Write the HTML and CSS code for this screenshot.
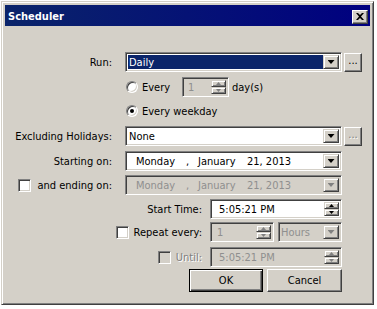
FILE: index.html
```html
<!DOCTYPE html>
<html lang="en">
<head>
    <meta charset="UTF-8">
    <title>Scheduler</title>
    <link rel="stylesheet" href="styles.css">
</head>
<body>
    <div class="window">
        <div class="titlebar">
            <span class="title">Scheduler</span>
            <span class="btn close-btn">
                <svg width="8" height="7" viewBox="0 0 8 7"><path d="M0 0h2l2 2 2-2h2L5 3.5 8 7H6L4 5 2 7H0l3-3.5z" fill="#000"/></svg>
            </span>
        </div>
        <div class="client">
            <div class="row row-run">
                <span class="label">Run:</span>
                <div class="field combo">
                    <span class="value selected">Daily</span>
                    <span class="drop-btn"><i class="arrow"></i></span>
                </div>
                <span class="btn dots-btn">...</span>
            </div>

            <div class="row row-every">
                <span class="radio"></span>
                <span class="opt-text every-text">Every</span>
                <div class="field spin spin-days disabled">
                    <span class="value">1</span>
                    <span class="spin-btns"><span class="spin-btn"><i class="up"></i></span><span class="spin-btn"><i class="down"></i></span></span>
                </div>
                <span class="unit">day(s)</span>
            </div>

            <div class="row row-weekday">
                <span class="radio checked"></span>
                <span class="opt-text">Every weekday</span>
            </div>

            <div class="row row-holidays">
                <span class="label">Excluding Holidays:</span>
                <div class="field combo">
                    <span class="value">None</span>
                    <span class="drop-btn"><i class="arrow"></i></span>
                </div>
                <span class="btn dots-btn disabled">...</span>
            </div>

            <div class="row row-start">
                <span class="label">Starting on:</span>
                <div class="field combo date">
                    <span class="value"><span class="d-day">Monday</span><span class="d-sep">,</span><span class="d-month">January</span><span>21, 2013</span></span>
                    <span class="drop-btn"><i class="arrow"></i></span>
                </div>
            </div>

            <div class="row row-end">
                <span class="label check-label"><span class="check"></span><span>and ending on:</span></span>
                <div class="field combo date disabled">
                    <span class="value"><span class="d-day">Monday</span><span class="d-sep">,</span><span class="d-month">January</span><span>21, 2013</span></span>
                    <span class="drop-btn"><i class="arrow"></i></span>
                </div>
            </div>

            <div class="row row-time">
                <span class="label label-wide">Start Time:</span>
                <div class="field spin time">
                    <span class="value">5:05:21 PM</span>
                    <span class="spin-btns"><span class="spin-btn"><i class="up"></i></span><span class="spin-btn"><i class="down"></i></span></span>
                </div>
            </div>

            <div class="row row-repeat">
                <span class="label label-wide check-label"><span class="check"></span><span>Repeat every:</span></span>
                <div class="field spin spin-repeat disabled">
                    <span class="value">1</span>
                    <span class="spin-btns"><span class="spin-btn"><i class="up"></i></span><span class="spin-btn"><i class="down"></i></span></span>
                </div>
                <div class="field combo hours disabled">
                    <span class="value">Hours</span>
                    <span class="drop-btn"><i class="arrow"></i></span>
                </div>
            </div>

            <div class="row row-until">
                <span class="label label-wide check-label disabled"><span class="check"></span><span>Until:</span></span>
                <div class="field spin time disabled">
                    <span class="value">5:05:21 PM</span>
                    <span class="spin-btns"><span class="spin-btn"><i class="up"></i></span><span class="spin-btn"><i class="down"></i></span></span>
                </div>
            </div>

            <div class="row row-buttons">
                <span class="btn push default">OK</span>
                <span class="btn push">Cancel</span>
            </div>
        </div>
    </div>
</body>
</html>
```

FILE: styles.css
```css
body {
    margin: 0;
    background-color: #fff;
    font-family: "DejaVu Sans Condensed", "DejaVu Sans", sans-serif;
    font-size: 11px;
    color: #000;
}

.window {
    box-sizing: border-box;
    width: 373px;
    height: 304px;
    margin: 1px 0 0 1px;
    padding: 3px;
    background-color: #d4d0c8;
    border: 1px solid;
    border-color: #d4d0c8 #404040 #404040 #d4d0c8;
    box-shadow: inset 1px 1px #fff, inset -1px -1px #808080;
}

.titlebar {
    height: 21px;
    display: flex;
    align-items: center;
    justify-content: space-between;
    padding: 0 2px 0 3px;
    background: linear-gradient(90deg, #0a246a, #000080);
    color: #fff;
    font-weight: bold;
}

.title {
    padding-top: 2px;
}

/* raised 3d look */
.btn {
    box-sizing: border-box;
    display: flex;
    align-items: center;
    justify-content: center;
    background-color: #d4d0c8;
    border: 1px solid;
    border-color: #fff #404040 #404040 #fff;
    box-shadow: inset -1px -1px #808080;
    flex: none;
}

.close-btn {
    width: 16px;
    height: 14px;
    margin-top: 2px;
}

.client {
    padding-top: 26px;
}

.row {
    display: flex;
    align-items: center;
    height: 20px;
}

.row-every { margin-top: 5px; }
.row-weekday { margin-top: 4px; }
.row-holidays { margin-top: 5px; }
.row-start { margin-top: 5px; }
.row-end { margin-top: 4px; }
.row-time { margin-top: 4px; }
.row-repeat { margin-top: 3px; }
.row-until { margin-top: 5px; }
.row-buttons {
    margin-top: 2px;
    height: 23px;
    padding-left: 184px;
    gap: 4px;
}

.label {
    flex: none;
    width: 107px;
    margin-right: 13px;
    text-align: right;
}

.label-wide {
    width: 197px;
    margin-right: 8px;
}

.check-label {
    display: flex;
    justify-content: flex-end;
    align-items: center;
    gap: 6px;
}

.label-wide.check-label {
    gap: 5px;
}

/* sunken 3d look */
.field,
.check,
.radio {
    box-sizing: border-box;
    background-color: #fff;
    border: 1px solid;
    border-color: #808080 #fff #fff #808080;
    box-shadow: inset 1px 1px #404040, inset -1px -1px #d4d0c8;
    flex: none;
}

.field {
    height: 20px;
    display: flex;
    align-items: stretch;
    padding: 2px;
}

.field .value {
    flex: 1;
    display: flex;
    align-items: center;
    white-space: nowrap;
    padding-left: 1px;
}

.field .value.selected {
    background-color: #0a246a;
    color: #fff;
}

.combo {
    width: 217px;
}

.drop-btn,
.spin-btn {
    box-sizing: border-box;
    display: flex;
    align-items: center;
    justify-content: center;
    background-color: #d4d0c8;
    border: 1px solid;
    border-color: #d4d0c8 #404040 #404040 #d4d0c8;
    box-shadow: inset 1px 1px #fff, inset -1px -1px #808080;
}

.drop-btn {
    width: 16px;
}

.arrow {
    display: block;
    width: 7px;
    height: 4px;
    background-color: #000;
    clip-path: polygon(0 0, 100% 0, 50% 100%);
}

.dots-btn {
    width: 18px;
    height: 19px;
    margin-left: 2px;
    padding-bottom: 3px;
}

.date .value {
    padding-left: 8px;
}

.d-day { width: 50px; }
.d-sep { width: 12px; }
.d-month { width: 49px; }

.spin-btns {
    display: flex;
    flex-direction: column;
    width: 15px;
}

.spin-btn {
    height: 8px;
}

.up,
.down {
    display: block;
    width: 5px;
    height: 3px;
    background-color: #000;
}

.up { clip-path: polygon(50% 0, 100% 100%, 0 100%); }
.down { clip-path: polygon(0 0, 100% 0, 50% 100%); }

.spin-days {
    width: 47px;
}

.spin-days .value { padding-left: 3px; }

.spin-repeat {
    width: 64px;
}

.spin-repeat .value { padding-left: 4px; }

.time {
    width: 132px;
}

.time .value { padding-left: 6px; }

.hours {
    width: 64px;
    margin-left: 4px;
}

.hours .value { padding-left: 0; }

.row-every,
.row-weekday {
    padding-left: 121px;
}

.radio {
    width: 12px;
    height: 12px;
    border-radius: 50%;
    margin-right: 4px;
    position: relative;
}

.radio.checked::after {
    content: "";
    position: absolute;
    left: 3px;
    top: 3px;
    width: 4px;
    height: 4px;
    border-radius: 50%;
    background-color: #000;
}

.every-text {
    width: 40px;
}

.unit {
    margin-left: 3px;
}

.check {
    width: 13px;
    height: 13px;
}

.push {
    width: 75px;
    height: 23px;
}

.push.default {
    width: 74px;
    border-color: #000;
    box-shadow: inset 1px 1px #fff, inset -1px -1px #404040, inset -2px -2px #808080;
}

/* disabled controls */
.field.disabled {
    background-color: #d4d0c8;
    color: #8f8f8f;
}

.disabled .arrow,
.disabled .up,
.disabled .down {
    background-color: #808080;
}

.btn.disabled,
.check-label.disabled {
    color: #808080;
    text-shadow: 1px 1px #fff;
}

.check-label.disabled .check {
    background-color: #d4d0c8;
}
```
